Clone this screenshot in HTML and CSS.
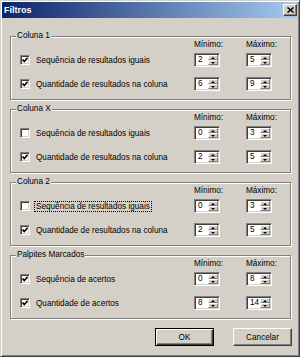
FILE: index.html
```html
<!DOCTYPE html>
<html lang="pt-BR">
<head>
    <meta charset="UTF-8">
    <title>Filtros</title>
    <link rel="stylesheet" href="styles.css">
</head>
<body>
    <div class="window">
        <div class="titlebar">
            <span class="title">Filtros</span>
            <button class="close-btn" aria-label="Fechar">
                <svg width="7" height="6" viewBox="0 0 7 6"><path d="M0.5 0.5 L6.5 5.5 M6.5 0.5 L0.5 5.5" stroke="#000" stroke-width="1.5"/></svg>
            </button>
        </div>

        <div class="dialog">
            <div class="group">
                <span class="group-title">Coluna 1</span>
                <div class="filter-grid">
                    <span></span><span class="col-head">Mínimo:</span><span class="col-head">Máximo:</span>

                    <label class="check"><span class="box checked"></span>Sequência de resultados iguais</label>
                    <span class="spin"><span class="spin-value">2</span><span class="spin-btns"><span class="up"></span><span class="down"></span></span></span>
                    <span class="spin"><span class="spin-value">5</span><span class="spin-btns"><span class="up"></span><span class="down"></span></span></span>

                    <label class="check"><span class="box checked"></span>Quantidade de resultados na coluna</label>
                    <span class="spin"><span class="spin-value">6</span><span class="spin-btns"><span class="up"></span><span class="down"></span></span></span>
                    <span class="spin"><span class="spin-value">9</span><span class="spin-btns"><span class="up"></span><span class="down"></span></span></span>
                </div>
            </div>

            <div class="group">
                <span class="group-title">Coluna X</span>
                <div class="filter-grid">
                    <span></span><span class="col-head">Mínimo:</span><span class="col-head">Máximo:</span>

                    <label class="check"><span class="box"></span>Sequência de resultados iguais</label>
                    <span class="spin"><span class="spin-value">0</span><span class="spin-btns"><span class="up"></span><span class="down"></span></span></span>
                    <span class="spin"><span class="spin-value">3</span><span class="spin-btns"><span class="up"></span><span class="down"></span></span></span>

                    <label class="check"><span class="box checked"></span>Quantidade de resultados na coluna</label>
                    <span class="spin"><span class="spin-value">2</span><span class="spin-btns"><span class="up"></span><span class="down"></span></span></span>
                    <span class="spin"><span class="spin-value">5</span><span class="spin-btns"><span class="up"></span><span class="down"></span></span></span>
                </div>
            </div>

            <div class="group">
                <span class="group-title">Coluna 2</span>
                <div class="filter-grid">
                    <span></span><span class="col-head">Mínimo:</span><span class="col-head">Máximo:</span>

                    <label class="check"><span class="box"></span><span class="focused">Sequência de resultados iguais</span></label>
                    <span class="spin"><span class="spin-value">0</span><span class="spin-btns"><span class="up"></span><span class="down"></span></span></span>
                    <span class="spin"><span class="spin-value">3</span><span class="spin-btns"><span class="up"></span><span class="down"></span></span></span>

                    <label class="check"><span class="box checked"></span>Quantidade de resultados na coluna</label>
                    <span class="spin"><span class="spin-value">2</span><span class="spin-btns"><span class="up"></span><span class="down"></span></span></span>
                    <span class="spin"><span class="spin-value">5</span><span class="spin-btns"><span class="up"></span><span class="down"></span></span></span>
                </div>
            </div>

            <div class="group">
                <span class="group-title">Palpites Marcados</span>
                <div class="filter-grid">
                    <span></span><span class="col-head">Mínimo:</span><span class="col-head">Máximo:</span>

                    <label class="check"><span class="box checked"></span>Sequência de acertos</label>
                    <span class="spin"><span class="spin-value">0</span><span class="spin-btns"><span class="up"></span><span class="down"></span></span></span>
                    <span class="spin"><span class="spin-value">8</span><span class="spin-btns"><span class="up"></span><span class="down"></span></span></span>

                    <label class="check"><span class="box checked"></span>Quantidade de acertos</label>
                    <span class="spin"><span class="spin-value">8</span><span class="spin-btns"><span class="up"></span><span class="down"></span></span></span>
                    <span class="spin"><span class="spin-value">14</span><span class="spin-btns"><span class="up"></span><span class="down"></span></span></span>
                </div>
            </div>

            <div class="actions">
                <button class="btn btn-default">OK</button>
                <button class="btn">Cancelar</button>
            </div>
        </div>
    </div>
</body>
</html>
```

FILE: styles.css
```css
/* Classic Windows dialog */
:root {
    --face: #d4d0c8;
    --shadow: #808080;
    --dark: #404040;
    --light: #ffffff;
}

* {
    box-sizing: border-box;
    margin: 0;
    padding: 0;
}

body {
    font-family: "Liberation Sans", Arial, sans-serif;
    font-size: 8.2px;
    color: #000;
    background: var(--face);
}

.window {
    width: 300px;
    height: 357px;
    background: var(--face);
    border: 1px solid;
    border-color: var(--face) var(--dark) var(--dark) var(--face);
    box-shadow: inset 1px 1px 0 var(--light), inset -1px -1px 0 var(--shadow);
    padding: 1px;
    display: flex;
    flex-direction: column;
}

/* Title bar */
.titlebar {
    height: 16px;
    background: linear-gradient(to right, #0a246a, #a6caf0);
    display: flex;
    align-items: center;
    justify-content: space-between;
    padding: 0 1px 0 2px;
}

.title {
    color: #fff;
    font-weight: bold;
    font-size: 9px;
}

.close-btn {
    width: 14px;
    height: 12px;
    background: var(--face);
    border: 1px solid;
    border-color: var(--light) var(--dark) var(--dark) var(--light);
    box-shadow: inset -1px -1px 0 var(--shadow);
    display: flex;
    align-items: center;
    justify-content: center;
}

/* Dialog body */
.dialog {
    flex: 1;
    padding: 18px 7px 0 8px;
    display: flex;
    flex-direction: column;
    gap: 9px;
}

.group {
    position: relative;
    height: 64px;
    border: 1px solid var(--shadow);
    box-shadow: inset 1px 1px 0 var(--light), 1px 1px 0 var(--light);
    padding: 3px 18px 0 9px;
}

.group-title {
    position: absolute;
    top: -6px;
    left: 5px;
    padding: 0 1px;
    background: var(--face);
    line-height: 10px;
}

.filter-grid {
    display: grid;
    grid-template-columns: 1fr 26px 26px;
    grid-template-rows: 10px 17px 24px;
    column-gap: 26px;
    align-items: end;
}

.col-head {
    white-space: nowrap;
    line-height: 10px;
}

.check {
    display: flex;
    align-items: center;
    gap: 6px;
    white-space: nowrap;
    height: 14px;
}

.box {
    width: 10px;
    height: 10px;
    flex: none;
    background: #fff;
    border: 1px solid;
    border-color: var(--shadow) var(--light) var(--light) var(--shadow);
    box-shadow: inset 1px 1px 0 var(--dark), inset -1px -1px 0 var(--face);
    position: relative;
}

.box.checked::after {
    content: "";
    position: absolute;
    left: 1px;
    top: 1px;
    width: 6px;
    height: 6px;
    background: no-repeat center / 6px 6px url("data:image/svg+xml;utf8,<svg xmlns='http://www.w3.org/2000/svg' viewBox='0 0 6 6'><path d='M0.5 2.6 L2.3 4.6 L5.6 0.8' fill='none' stroke='black' stroke-width='1.6'/></svg>");
}

.focused {
    outline: 1px dotted #000;
    outline-offset: 0;
    padding: 0 1px;
    margin-left: -1px;
}

/* Spin boxes */
.spin {
    display: flex;
    width: 26px;
    height: 14px;
    background: #fff;
    border: 1px solid;
    border-color: var(--shadow) var(--light) var(--light) var(--shadow);
    box-shadow: inset 1px 1px 0 var(--dark), inset -1px -1px 0 var(--face);
    padding: 1px;
}

.spin-value {
    flex: 1;
    padding-left: 2px;
    line-height: 10px;
}

.spin-btns {
    width: 10px;
    display: flex;
    flex-direction: column;
}

.spin-btns span {
    flex: 1;
    background: var(--face);
    border: 1px solid;
    border-color: var(--light) var(--shadow) var(--shadow) var(--light);
    display: flex;
    align-items: center;
    justify-content: center;
}

.spin-btns span::after {
    content: "";
    width: 0;
    height: 0;
    border-left: 2px solid transparent;
    border-right: 2px solid transparent;
}

.spin-btns .up::after {
    border-bottom: 2px solid #000;
}

.spin-btns .down::after {
    border-top: 2px solid #000;
}

/* Buttons */
.actions {
    display: flex;
    justify-content: flex-end;
    gap: 19px;
    margin: 0 -1px 0 0;
}

.btn {
    width: 59px;
    height: 18px;
    font-family: inherit;
    font-size: 8.2px;
    background: var(--face);
    border: 1px solid;
    border-color: var(--light) var(--dark) var(--dark) var(--light);
    box-shadow: inset -1px -1px 0 var(--shadow);
}

.btn-default {
    border-color: #000;
    box-shadow: inset 1px 1px 0 var(--light), inset -1px -1px 0 var(--dark), inset -2px -2px 0 var(--shadow);
}
```
